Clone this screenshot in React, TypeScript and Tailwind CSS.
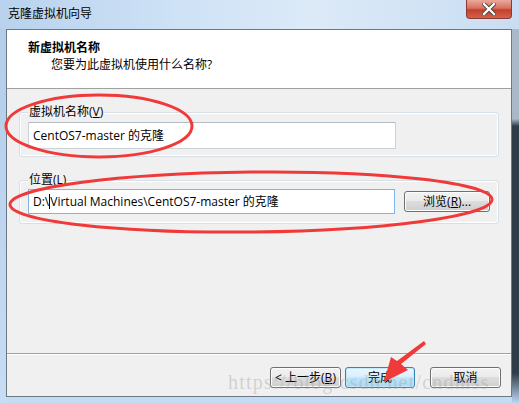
import React from 'react';

const ui = { fontFamily: '"Open Sans", "Noto Sans CJK SC", sans-serif' };

function WinButton({ label, primary, width }: { label: React.ReactNode; primary?: boolean; width: string }) {
  return (
    <button
      type="button"
      className={`${width} h-[21px] rounded-[3px] border text-[12px] leading-none text-black flex items-center justify-center ${
        primary
          ? 'border-[#3c7fb1] bg-[linear-gradient(#eaf6fd_0%,#d9f0fc_45%,#bee6fd_50%,#a7d9f5_100%)] shadow-[inset_0_0_0_1px_#c6e8fb]'
          : 'border-[#707070] bg-[linear-gradient(#f2f2f2_0%,#ebebeb_45%,#dddddd_50%,#cfcfcf_100%)] shadow-[inset_0_0_0_1px_#fcfcfc]'
      }`}
    >
      {label}
    </button>
  );
}

function GroupBox({ label, children }: { label: React.ReactNode; children: React.ReactNode }) {
  return (
    <div className="relative mx-[12px] rounded-[3px] border border-[#d5dfe5] shadow-[inset_0_0_0_1px_#ffffff]">
      <span className="absolute left-[8px] top-[-8px] bg-[#f0f0f0] px-[1px] text-[12px] leading-[14px] text-black">
        {label}
      </span>
      {children}
    </div>
  );
}

export default function App() {
  return (
    <div className="relative w-[519px] h-[403px] overflow-hidden bg-[#c4dbf2]" style={ui}>
      {/* title bar */}
      <div className="flex h-[29px] items-start justify-between bg-[linear-gradient(90deg,#b8d2ed_0%,#cfe2f6_35%,#dceaf8_60%,#c9ddf2_100%)] pl-[8px] pr-[7px]">
        <span className="mt-[6px] text-[12px] leading-[16px] text-black">克隆虚拟机向导</span>
        <div className="flex h-[19px] w-[46px] items-center justify-center rounded-b-[4px] border border-t-0 border-[#8a3b33] bg-[linear-gradient(#e9a99c_0%,#d9715f_45%,#c4402b_55%,#d2624c_100%)]">
          <svg width="14" height="12" viewBox="0 0 14 12">
            <path d="M2 1 L12 11 M12 1 L2 11" stroke="#3a3a3a" strokeWidth="4" strokeLinecap="square" />
            <path d="M2 1 L12 11 M12 1 L2 11" stroke="#ffffff" strokeWidth="2.4" strokeLinecap="square" />
          </svg>
        </div>
      </div>

      <div className="flex">
        {/* left frame */}
        <div className="w-[6px] h-[374px] bg-[linear-gradient(#b4cde8,#c6ddf4)]" />
        {/* client */}
        <div className="flex h-[368px] w-[506px] flex-col border border-[#6a7886] bg-[#f0f0f0]">
          <div className="h-[59px] shrink-0 border-b border-[#a0a0a0] bg-white pl-[21px] pt-[10px]">
            <div className="text-[12px] font-bold leading-[16px] text-black">新虚拟机名称</div>
            <div className="ml-[23px] mt-[1px] text-[12px] leading-[16px] text-black">您要为此虚拟机使用什么名称?</div>
          </div>

          <div className="flex flex-1 flex-col border-b border-[#a0a0a0] pt-[23px]">
            <GroupBox label={<>虚拟机名称(<span className="underline">V</span>)</>}>
              <div className="px-[8px] pb-[7px] pt-[9px]">
                <div className="flex h-[27px] w-[368px] items-center border border-[#c9d2da] border-t-[#b4bcc4] bg-white pl-[4px] text-[12px] text-black">
                  CentOS7-master 的克隆
                </div>
              </div>
            </GroupBox>

            <div className="h-[23px]" />

            <GroupBox label={<>位置(<span className="underline">L</span>)</>}>
              <div className="flex items-center gap-[9px] px-[8px] pb-[9px] pt-[8px]">
                <div className="flex h-[25px] w-[368px] items-center border border-[#7eb4ea] bg-white pl-[4px] text-[12px] text-black">
                  D:\<span className="inline-block h-[15px] w-px bg-black" />Virtual Machines\CentOS7-master 的克隆
                </div>
                <WinButton width="w-[86px]" label={<>浏览(<span className="underline">R</span>)...</>} />
              </div>
            </GroupBox>
          </div>

          <div className="h-[42px] shrink-0 border-t border-white">
            <div className="flex justify-end pr-[10px] pt-[12px]">
              <WinButton width="w-[71px]" label={<>&lt; 上一步(<span className="underline">B</span>)</>} />
              <div className="w-[4px]" />
              <WinButton width="w-[70px]" primary label="完成" />
              <div className="w-[15px]" />
              <WinButton width="w-[71px]" label="取消" />
            </div>
          </div>
        </div>
        {/* right frame */}
        <div className="w-[7px] h-[374px] bg-[linear-gradient(#a9b9c7_0%,#a9b9c7_24%,#2f3d48_26%,#2f3d48_92%,#bcd6f1_100%)]" />
      </div>

      {/* watermark */}
      <div className="pointer-events-none absolute left-[228px] top-[370px] text-[20px] leading-[24px] tracking-[1.2px] text-[rgba(170,170,170,0.45)]" style={{ fontFamily: '"Liberation Serif", serif' }}>
        https://blog.csdn.net/cndmss
      </div>

      {/* annotations */}
      <svg className="pointer-events-none absolute left-0 top-0" width="519" height="403" viewBox="0 0 519 403">
        <ellipse cx="99" cy="126" rx="93" ry="31" fill="none" stroke="#f03a3a" strokeWidth="3" />
        <ellipse cx="251" cy="202" rx="241" ry="30" fill="none" stroke="#f03a3a" strokeWidth="3" transform="rotate(-0.6 251 202)" />
        <polygon points="424,341 426,344 401,364 408,370 384,382 391,357 397,361" fill="#f03a3a" />
      </svg>
    </div>
  );
}
